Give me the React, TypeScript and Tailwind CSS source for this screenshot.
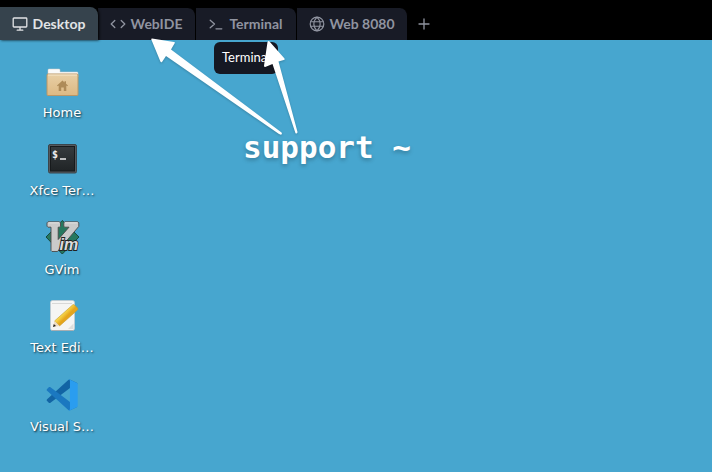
import type { ReactNode } from "react";

const stroke = {
  fill: "none",
  stroke: "currentColor",
  strokeWidth: 1.3,
  strokeLinecap: "round" as const,
  strokeLinejoin: "round" as const,
};

function TabIcon({ children }: { children: ReactNode }) {
  return (
    <svg className="h-4 w-4 shrink-0" viewBox="0 0 16 16" aria-hidden="true" {...stroke}>
      {children}
    </svg>
  );
}

type TabProps = { label: string; icon: ReactNode; width: string; active?: boolean };

function Tab({ label, icon, width, active = false }: TabProps) {
  const look = active
    ? "z-10 h-[33px] bg-[#36434d] text-[#e2e4e6] shadow-[1px_0_3px_#000000]"
    : "h-8 border-r border-black bg-[#181b26] text-[#9094a0]";
  return (
    <button
      type="button"
      role="tab"
      aria-selected={active}
      className={`relative flex items-center gap-1 rounded-tr-lg px-3 text-sm font-bold whitespace-nowrap ${width} ${look}`}
    >
      <TabIcon>{icon}</TabIcon>
      <span className="grow text-center">{label}</span>
    </button>
  );
}

function DesktopItem({ label, children }: { label: string; children: ReactNode }) {
  return (
    <button
      type="button"
      className="flex flex-col items-center gap-1 pt-[3px] font-['DejaVu_Sans',sans-serif] text-[13px] leading-5 text-white [text-shadow:1px_1px_2px_#000b]"
    >
      <svg className="h-9 w-9 shrink-0" viewBox="0 0 36 36" aria-hidden="true">
        {children}
      </svg>
      <span>{label}</span>
    </button>
  );
}

function HomeIcon() {
  return (
    <g transform="translate(0 1)">
      <defs>
        <linearGradient id="folder" x2="0" y2="1">
          <stop stopColor="#e8cfa5" />
          <stop offset="1" stopColor="#dcb984" />
        </linearGradient>
      </defs>
      <path d="M4 10V6q0-1 1-1h10q1 0 1 1v2h17q1 0 1 1v4H4z" fill="#fafafa" stroke="#d4cfc5" strokeWidth=".5" />
      <rect x="3" y="10" width="31" height="21.500" rx="1" fill="url(#folder)" stroke="#b99665" />
      <path d="M4 11h29" stroke="#f6e7cc" />
      <path d="m18.500 16.500-5.500 5 .7.800 1-.8V27h2.500v-3.500h2.600V27h2.500v-5.500l1 .8.700-.8-2-1.800v-2.500h-1.500v1.200z" fill="#ae8b58" />
    </g>
  );
}

function TerminalAppIcon() {
  return (
    <>
      <defs>
        <linearGradient id="screen" x2="0" y2="1">
          <stop stopColor="#363b3e" />
          <stop offset="1" stopColor="#202426" />
        </linearGradient>
      </defs>
      <rect x="4.500" y="3.500" width="28" height="28.500" rx="1.500" fill="#55595d" stroke="#3a454c" />
      <rect x="6.500" y="5.500" width="24" height="24.500" fill="url(#screen)" stroke="#171a1c" />
      <text x="8" y="17" fontSize="10" fontWeight="700" fill="#eeeeee" className="font-['DejaVu_Sans_Mono',monospace] [text-shadow:none]">
        $
      </text>
      <path d="M16 18h6" stroke="#eeeeee" strokeWidth="1.500" />
    </>
  );
}

function VimIcon() {
  return (
    <>
      <path d="M18.300 0.500 35 17 18.300 34 2 17z" fill="#26785f" stroke="#17483b" />
      <path
        d="M4 1.800h11.500l1 1v3.400l-1 1h-1.300v12.300L25 7.200h-4.200l-1-1V2.800l1-1h13l1 1v3.600L13.500 31.500H8l-1-1V7.200H4l-1-1V2.800z"
        fill="#cacaca"
        stroke="#4a4a4a"
        strokeWidth=".9"
      />
      <path d="M4.500 2.800h10.500M21 2.800h12.500" stroke="#e8e8e8" />
      <text
        x="15.500"
        y="29.500"
        fontSize="16"
        fontWeight="700"
        fontStyle="italic"
        fill="#dcdcdc"
        stroke="#222222"
        strokeWidth="1.800"
        paintOrder="stroke"
        className="font-['Liberation_Sans',sans-serif] [text-shadow:none]"
      >
        im
      </text>
    </>
  );
}

function EditorIcon() {
  return (
    <g transform="translate(-1 -2)">
      <defs>
        <linearGradient id="pencil" gradientUnits="userSpaceOnUse" x1="19" y1="17" x2="23" y2="21">
          <stop stopColor="#fbe65b" />
          <stop offset="1" stopColor="#e5a51c" />
        </linearGradient>
      </defs>
      <rect x="7.500" y="4.500" width="24" height="30" rx="2" fill="#f5f5f4" stroke="#c8ccd0" strokeWidth=".7" />
      <path d="M9.500 7.500h20" stroke="#bbbbbb" strokeDasharray="1 1" />
      <path d="M8.500 34.500h22" stroke="#a9aeb2" />
      <path d="m25 33 5.500-5.500V33z" fill="#dededc" />
      <path d="m11.500 25 18-16q1-1 2 0l3 3q1 1 0 2L16.500 30z" fill="url(#pencil)" stroke="#c69828" strokeWidth=".6" />
      <path d="m10 31 1.500-6 5 5z" fill="#eddcc4" />
      <path d="m10 31 .8-3 2.200 2z" fill="#222222" />
    </g>
  );
}

function CodeAppIcon() {
  return (
    <g transform="translate(2.700 2.500) scale(.31)">
      <path
        d="M96.460 10.800 75.860.880C73.470-.270 70.620.210 68.750 2.080L1.300 63.580C-.520 65.240-.510 68.090 1.300 69.750L6.810 74.750C8.300 76.100 10.530 76.200 12.130 74.990L93.360 13.370C96.090 11.300 100 13.250 100 16.670C100 14.030 98.620 11.840 96.460 10.800z"
        fill="#1264a4"
      />
      <path
        d="M96.460 89.200 75.860 99.120C73.470 100.270 70.620 99.790 68.750 97.920L1.300 36.420C-.520 34.760-.510 31.910 1.300 30.250L6.810 25.250C8.300 23.900 10.530 23.800 12.130 25.010L93.360 86.630C96.090 88.700 100 86.750 100 83.330C100 85.970 98.620 88.160 96.460 89.200z"
        fill="#1b78c0"
      />
      <path
        d="M75.860 99.130C73.470 100.270 70.620 99.790 68.750 97.920C71.060 100.220 75 98.590 75 95.330V4.670C75 1.410 71.060-.220 68.750 2.080C70.620.210 73.470-.270 75.860.870L96.460 10.780C98.620 11.820 100 14.010 100 16.410V83.590C100 85.990 98.620 88.180 96.460 89.220z"
        fill="#2a9df0"
      />
    </g>
  );
}

export default function App() {
  return (
    <div className="flex min-h-screen flex-col bg-[#47a6cf]">
      <header className="flex h-10 items-end bg-black font-[Lato,sans-serif]">
        <div role="tablist" className="flex items-end">
          <Tab
            active
            label="Desktop"
            width="min-w-[98px]"
            icon={<path d="M2 2h12q.8 0 .8.800v7.400q0 .8-.8.800H2q-.8 0-.8-.8V2.800q0-.8.800-.8zM8 11v3M5.200 14.200h5.600" />}
          />
          <Tab label="WebIDE" width="min-w-[98px]" icon={<path d="M4.800 4.500 1.200 8l3.600 3.500M11.200 4.500 14.800 8l-3.600 3.500" />} />
          <Tab label="Terminal" width="min-w-[101px]" icon={<path d="M2.200 4.200 6.500 8l-4.300 3.800M8 12.800h5.800" />} />
          <Tab
            label="Web 8080"
            width="min-w-[111px]"
            icon={
              <>
                <circle cx="8" cy="8" r="6.800" strokeWidth="1.200" />
                <path d="M8 1.200c-4.200 4-4.200 9.600 0 13.600M8 1.200c4.200 4 4.200 9.600 0 13.600M2 5.700h12M2 10.300h12" strokeWidth="1.100" />
              </>
            }
          />
        </div>
        <button type="button" aria-label="New tab" className="flex h-8 w-8 items-center justify-center text-[#9094a0]">
          <svg className="h-3 w-3" viewBox="0 0 12 12" aria-hidden="true" {...stroke}>
            <path d="M6 1v10M1 6h10" />
          </svg>
        </button>
      </header>
      <main className="relative flex grow">
        <nav aria-label="Desktop shortcuts" className="grid w-[124px] grid-rows-5 py-5">
          <DesktopItem label="Home"><HomeIcon /></DesktopItem>
          <DesktopItem label="Xfce Ter…"><TerminalAppIcon /></DesktopItem>
          <DesktopItem label="GVim"><VimIcon /></DesktopItem>
          <DesktopItem label="Text Edi…"><EditorIcon /></DesktopItem>
          <DesktopItem label="Visual S…"><CodeAppIcon /></DesktopItem>
        </nav>
        <div role="tooltip" className="absolute top-0.5 left-[214px] flex h-8 items-center rounded-md bg-[#151823] px-2 font-[Lato,sans-serif] text-[13px] text-white">
          Terminal
        </div>
        <svg className="absolute -top-2 left-[148px] h-[110px] w-[156px] drop-shadow-[0_1px_1px_#0003]" viewBox="0 0 156 110" fill="#ffffff" aria-hidden="true">
          <path d="M4 6.500 26 10q1.500.5.500 1.500L23 17.500 133.500 100.500q1 1.500-.5 2.300L131 102 18 24l-4 6q-1 .7-1.600-.4L3.300 7.500q-.2-1 .7-1z" />
          <path d="M121.500 9.500 136.500 26.500q.6 1.500-.8 1.500l-5.200 1.500L149.500 100q0 2-2 1.200L124.500 32l-7.300 3q-1.300 0-1.200-1.200L119.500 10q1-1.500 2-.5z" />
        </svg>
        <p className="absolute top-[89px] left-[243px] font-['DejaVu_Sans_Mono',monospace] text-[31px] leading-9 font-bold whitespace-nowrap text-white [text-shadow:0_2px_4px_#0004]">
          support ~
        </p>
      </main>
    </div>
  );
}
